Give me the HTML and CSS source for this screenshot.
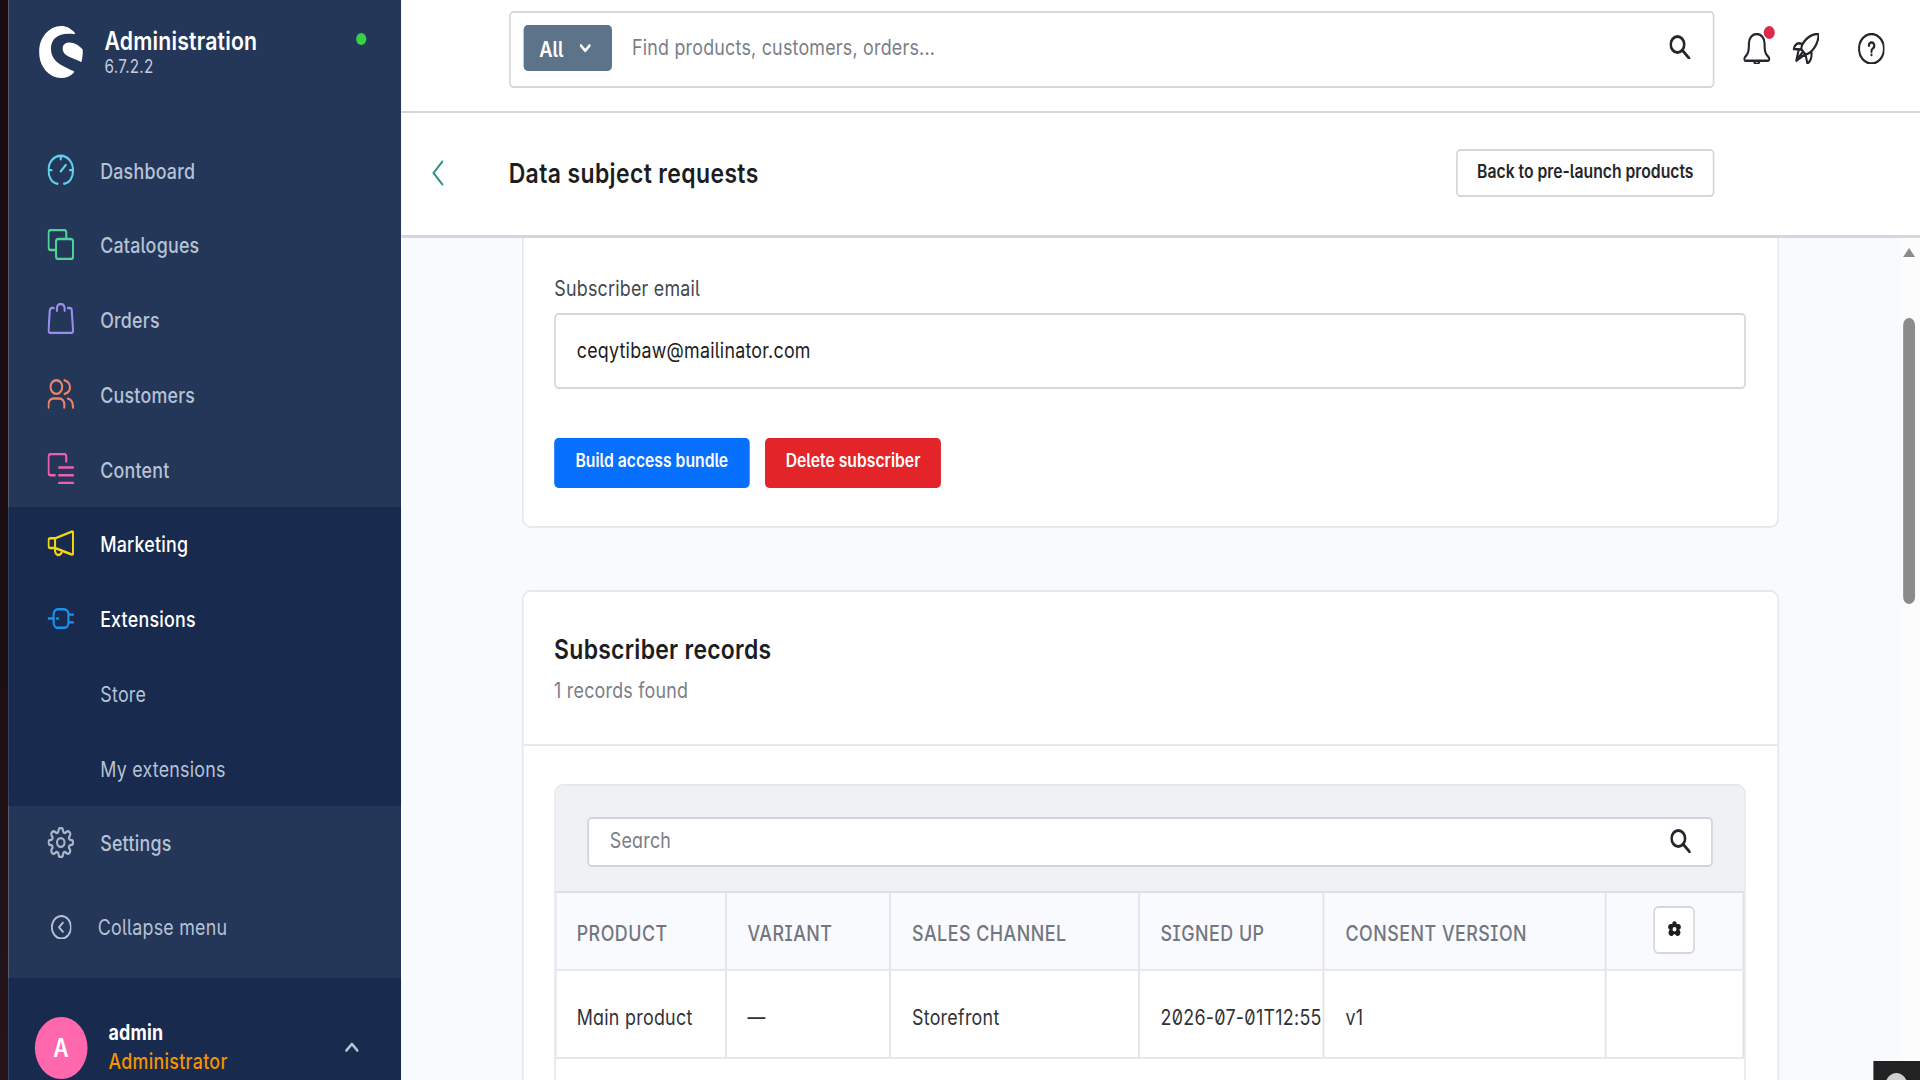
FILE: index.html
```html
<!DOCTYPE html>
<html lang="en">
<head>
	<meta charset="utf-8">
	<title>Data subject requests | Administration</title>
	<link rel="stylesheet" href="styles.css">
</head>
<body>
<div class="app">
	<div class="edge"></div>

	<aside class="sidebar">
		<div class="brand">
			<svg class="brand-logo" viewBox="0 0 52 52">
				<path d="M42.4 7.3C38 2.5 32 0 26 0 11.6 0 0 11.6 0 26s11.6 26 26 26c6 0 11-2 14.8-5.3.6-.6.4-1.2-.3-1.6C28 40 14 36 14 22.5 14 12 24 6 41.5 8.2z"/>
				<path d="M51.3 23.5C47 19.5 42 16.6 35.500 16.6c-5 0-7.800 2.400-7.800 6 0 8.400 13 9 21.300 13.400.4.2.8 0 .9-.5 1.300-4 1.700-8 1.400-12z"/>
			</svg>
			<div class="brand-text">
				<div class="brand-name">Administration</div>
				<div class="brand-version">6.7.2.2</div>
			</div>
			<span class="brand-status"></span>
		</div>

		<nav class="nav">
			<a class="nav-item">
				<svg class="icon c-dashboard" viewBox="0 0 24 24"><path d="M9 23C3.500 22.500.8 17.500.8 12.500a11.200 11.200 0 0 1 22.400 0c0 5-2.700 10-8.200 10.500M12 1.500v2.500M1 12.500h2.500M23 12.500h-2.500M12 13.500l4.500-5"/></svg>
				<span>Dashboard</span>
			</a>
			<a class="nav-item">
				<svg class="icon c-catalogue" viewBox="0 0 24 24"><rect x="7.700" y="7.700" width="15.500" height="15.500" rx="2"/><path d="M7.500 16.300H2.800a2 2 0 0 1-2-2V2.800a2 2 0 0 1 2-2H15a2 2 0 0 1 2 2v4.700"/></svg>
				<span>Catalogues</span>
			</a>
			<a class="nav-item">
				<svg class="icon c-order icon-up" viewBox="0 0 24 24"><path d="M5.500 3.900H4a2 2 0 0 0-2 2L.8 21.200a2 2 0 0 0 2 2h18.400a2 2 0 0 0 2-2L22 5.900a2 2 0 0 0-2-2h-1.500M8.500 6V4.200a3.500 3.500 0 0 1 7 0V6"/></svg>
				<span>Orders</span>
			</a>
			<a class="nav-item">
				<svg class="icon c-customer" viewBox="0 0 24 24"><circle cx="8" cy="7" r="5.300"/><path d="M.8 22.800v-2.500a4.500 4.500 0 0 1 4.500-4.500h5.400a4.500 4.500 0 0 1 4.500 4.500v2.500M15.500 1.800c6.500 1.700 6.500 8.900 0 10.500M18.500 16c3.200.6 4.700 2.500 4.700 6.800"/></svg>
				<span>Customers</span>
			</a>
			<a class="nav-item">
				<svg class="icon c-content" viewBox="0 0 24 24"><path d="M6.500 17.300H2.800a2 2 0 0 1-2-2V2.800a2 2 0 0 1 2-2H15a2 2 0 0 1 2 2v3.700M10.500 11.300h12.700M10.500 17.200h12.700M10.500 23.200h12.700"/></svg>
				<span>Content</span>
			</a>
			<div class="nav-group">
				<a class="nav-item active">
					<svg class="icon c-marketing" viewBox="0 0 24 24"><path d="M6.800 8L22 2.800q1.200-.4 1.200 1v15.700q0 1.400-1.200 1L6.800 15.500H2.300a1.500 1.500 0 0 1-1.500-1.500V9.500A1.500 1.500 0 0 1 2.300 8zM6.800 8v7.500M6.800 15.800c-.6 6.200 5.200 6.700 6.400 2"/></svg>
					<span>Marketing</span>
				</a>
				<a class="nav-item active">
					<svg class="icon c-extension" viewBox="0 0 24 24"><path d="M9.500 4.800H15a4 4 0 0 1 4 4v6.400a4 4 0 0 1-4 4H9.500a4 4 0 0 1-4-4V8.800a4 4 0 0 1 4-4zM.8 12H5M8.500 12h1M19.500 9h3.700M19.500 15h3.700"/></svg>
					<span>Extensions</span>
				</a>
				<a class="nav-item sub"><span>Store</span></a>
				<a class="nav-item sub"><span>My extensions</span></a>
			</div>
			<a class="nav-item">
				<svg class="icon c-settings" viewBox="0 0 24 24"><circle cx="12" cy="12" r="3.400"/><path d="M10 2.700a2 2 0 0 1 4 0q.2 2.300 2.300 1.800l1-.8a2.200 2.200 0 0 1 3 3l-.8 1q-.5 2.100 1.800 2.300a2 2 0 0 1 0 4q-2.300.2-1.800 2.300l.8 1a2.200 2.200 0 0 1-3 3l-1-.8q-2.100-.5-2.300 1.800a2 2 0 0 1-4 0q-.2-2.300-2.300-1.800l-1 .8a2.200 2.200 0 0 1-3-3l.8-1q.5-2.100-1.800-2.300a2 2 0 0 1 0-4q2.300-.2 1.800-2.300l-.8-1a2.200 2.200 0 0 1 3-3l1 .8q2.100.5 2.300-1.800z"/></svg>
				<span>Settings</span>
			</a>
		</nav>

		<a class="collapse">
			<svg class="collapse-icon" viewBox="0 0 24 24"><circle cx="12" cy="12" r="11"/><path d="M13.700 7.500L9.200 12l4.500 4.500"/></svg>
			<span>Collapse menu</span>
		</a>

		<div class="user">
			<div class="avatar">A</div>
			<div class="user-text">
				<div class="user-name">admin</div>
				<div class="user-role">Administrator</div>
			</div>
			<svg class="user-caret" viewBox="0 0 16 10"><path d="M1.500 8.500L8 2l6.500 6.500"/></svg>
		</div>
	</aside>

	<main class="main">
		<header class="topbar">
			<div class="search">
				<button class="search-type">All
					<svg class="caret" viewBox="0 0 12 8"><path d="M1.200 1.200L6 6l4.800-4.800"/></svg>
				</button>
				<span class="search-placeholder">Find products, customers, orders...</span>
				<svg class="lens" viewBox="0 0 24 24"><circle cx="9.300" cy="9.300" r="7.800"/><path d="M15 15l7.800 7.800"/></svg>
			</div>
			<div class="bell">
				<svg class="top-icon" viewBox="0 0 24 24"><path d="M12 .8a7 7 0 0 0-7 7c0 7.500-1.300 8.500-3.200 10.200-1.800 1.600-1 3.200.5 3.200h19.400c1.500 0 2.300-1.600.5-3.200C20.300 16.300 19 15.300 19 7.800a7 7 0 0 0-7-7zM9.800 21.500a2.200 2.200 0 0 0 4.400 0"/></svg>
				<span class="bell-badge"></span>
			</div>
			<svg class="top-icon rocket" viewBox="0 0 24 24"><path d="M7.800 12.500C7.500 7.500 15 .8 22.200.8q1 0 1 1C23 9 16.500 16 11.500 16.200zM8 8.300C4.800 6.800 1.500 9 .9 12.200l6.900.3M16.800 14.500c.6 3.800-.8 7.300-3.600 8.700l-1.700-7M7.800 12.500l3.700 3.700M5.500 12.500L3.300 21l8-4.800M3.300 21l5.700-6.500"/></svg>
			<svg class="top-icon help" viewBox="0 0 24 24"><circle cx="12" cy="12" r="11.200"/><path d="M9.700 9.700a2.400 2.400 0 1 1 3.500 2.100c-.9.500-1.200.9-1.200 1.900v.6M12 16.600v.2"/></svg>
		</header>

		<div class="pagebar">
			<svg class="back" viewBox="0 0 14 26"><path d="M12.500 1.500L2 13l10.500 11.500"/></svg>
			<h1 class="page-title">Data subject requests</h1>
			<button class="btn btn-outline">Back to pre-launch products</button>
		</div>

		<div class="content">
			<div class="cards">
				<section class="card card-lookup">
					<label class="label">Subscriber email</label>
					<div class="input">ceqytibaw@mailinator.com</div>
					<div class="actions">
						<button class="btn btn-primary">Build access bundle</button>
						<button class="btn btn-danger">Delete subscriber</button>
					</div>
				</section>

				<section class="card card-records">
					<div class="card-head">
						<h2 class="card-title">Subscriber records</h2>
						<p class="card-sub">1 records found</p>
					</div>
					<div class="listing">
						<div class="listing-bar">
							<div class="listing-search">
								<span>Search</span>
								<svg class="lens" viewBox="0 0 24 24"><circle cx="9.300" cy="9.300" r="7.800"/><path d="M15 15l7.800 7.800"/></svg>
							</div>
						</div>
						<div class="row row-head">
							<div class="cell">PRODUCT</div>
							<div class="cell">VARIANT</div>
							<div class="cell">SALES CHANNEL</div>
							<div class="cell">SIGNED UP</div>
							<div class="cell">CONSENT VERSION</div>
							<div class="cell cell-tools">
								<button class="gear"><svg viewBox="0 0 16 16"><path fill-rule="evenodd" d="M8 .3c1.700 0 2.700 1.200 2.600 3 1.800-.6 3.800-.2 4.600 1.500.8 1.900 0 3.300-1.700 3.900 1.500 1.300 2 3.400.9 4.800-1.500 1.900-4 2-5.200.2L8 13l-1.200.7c-1.200 1.800-3.700 1.700-5.200-.2-1.100-1.400-.6-3.500.9-4.800C.8 8.100 0 6.700.8 4.800c.8-1.700 2.800-2.100 4.600-1.500C5.300 1.500 6.300.3 8 .3zm0 5.700a2.300 2.300 0 1 0 0 4.600A2.300 2.300 0 0 0 8 6z"/></svg></button>
							</div>
						</div>
						<div class="row row-body">
							<div class="cell">Main product</div>
							<div class="cell">—</div>
							<div class="cell">Storefront</div>
							<div class="cell">2026-07-01T12:55</div>
							<div class="cell">v1</div>
							<div class="cell"></div>
						</div>
					</div>
				</section>
			</div>
			<div class="scrollbar">
				<span class="scroll-up"></span>
				<span class="scroll-thumb"></span>
			</div>
		</div>
	</main>

	<div class="debugbar"><span class="debugbar-logo"></span></div>
</div>
</body>
</html>
```
FILE: styles.css
```css
* { box-sizing: border-box; }
html { overflow: hidden; }
body {
	margin: 0;
	width: 1920px;
	height: 1080px;
	overflow: hidden;
	font-family: Inter, "Liberation Sans", sans-serif;
	font-feature-settings: "cv05", "cv08";
	font-size: 21px;
	letter-spacing: .27px;
	color: #1c1d21;
	background: #f9fafe;
}
h1, h2, p { margin: 0; }
button { font: inherit; font-feature-settings: inherit; letter-spacing: 0; }
svg { fill: none; stroke: currentColor; stroke-linecap: round; stroke-linejoin: round; flex: none; display: block; }

/* the whole admin is drawn slightly condensed */
.app {
	position: relative;
	display: flex;
	width: 2258.800px;
	height: 1080px;
	overflow: hidden;
	transform: scaleX(.85);
	transform-origin: 0 0;
}
.edge { width: 10px; flex: none; background: linear-gradient(#180c12, #1c0f14 60%, #26141b); }

/* sidebar */
.sidebar {
	width: 462.400px;
	flex: none;
	display: flex;
	flex-direction: column;
	background: #243758;
	color: #b6c2d6;
}
.brand {
	display: flex;
	align-items: flex-start;
	height: 133.200px;
	padding: 25.700px 41px 0 36px;
	color: #fff;
}
.brand-logo { width: 52px; height: 52px; fill: #fff; stroke: none; }
.brand-text { flex: 1; margin-left: 25px; }
.brand-name { font-size: 25px; font-weight: 600; line-height: 31px; letter-spacing: .2px; }
.brand-version { font-size: 18px; line-height: 20px; color: #c3cddd; }
.brand-status { width: 12.500px; height: 12.500px; margin-top: 7px; border-radius: 50%; background: #37d046; }
.nav-item {
	display: flex;
	align-items: center;
	gap: 30.500px;
	height: 74.750px;
	padding: 1px 0 0 46.300px;
	font-weight: 500;
}
.nav-item.active { color: #fff; }
.nav-item.sub { padding-left: 108px; font-weight: 400; padding-top: 2px; }
.nav-group { background: #182a4d; }
.icon { width: 31px; height: 31px; stroke-width: 1.900; margin-top: -3px; }
.icon-up { margin-top: -5px; }
.c-dashboard { color: #5fd0ea; }
.c-catalogue { color: #4fd39a; }
.c-order { color: #9a8df0; }
.c-customer { color: #e98562; }
.c-content { color: #ee5fae; }
.c-marketing { color: #f5d412; }
.c-extension { color: #1a92ee; }
.c-settings { color: #a9b6c9; }
.collapse {
	display: flex;
	align-items: center;
	gap: 31px;
	height: 97px;
	padding: 0 0 4px 49.500px;
}
.collapse-icon { width: 24.500px; height: 24.500px; stroke-width: 2; }
.user {
	display: flex;
	flex: 1;
	padding: 39.500px 50px 0 31px;
	background: #182a4d;
}
.avatar {
	width: 62px;
	height: 62px;
	border-radius: 50%;
	background: #ff68ac;
	color: #fff;
	font-size: 25px;
	font-weight: 600;
	line-height: 62px;
	text-align: center;
	flex: none;
}
.user-text { flex: 1; margin: 1px 0 0 24.500px; line-height: 29px; }
.user-name { color: #fff; font-weight: 700; }
.user-role { color: #f59300; font-weight: 500; letter-spacing: .35px; }
.user-caret { width: 16px; height: 10px; margin-top: 25px; stroke-width: 2.800; }

/* top bar */
.main { flex: 1; display: flex; flex-direction: column; background: #fff; }
.topbar {
	display: flex;
	height: 112.500px;
	padding: 10.500px 0 0 126.500px;
	border-bottom: 2px solid #d5d7de;
}
.search {
	display: flex;
	align-items: center;
	width: 1418.500px;
	height: 77.500px;
	padding: 0 26.500px 3px 15px;
	border: 2px solid #d5d7de;
	border-radius: 5px;
}
.search-type {
	display: flex;
	align-items: center;
	justify-content: space-between;
	width: 104.500px;
	height: 45.500px;
	padding: 2px 25px 0 18.500px;
	border: 0;
	border-radius: 5px;
	background: #5c738a;
	color: #fff;
	font-size: 21.500px;
	font-weight: 600;
}
.caret { width: 13px; height: 9px; stroke-width: 2.600; margin-top: -1px; }
.search-placeholder { flex: 1; margin-left: 23px; color: #7b7e86; }
.lens { width: 24.500px; height: 24.500px; stroke-width: 3; color: #24262b; margin-top: -2px; }
.top-icon { width: 31.500px; height: 31.500px; stroke-width: 1.900; color: #24262b; margin-top: 22px; }
.bell { position: relative; margin: 0 26px 0 34px; }
.bell-badge {
	position: absolute;
	top: 15.500px;
	right: -5px;
	width: 13px;
	height: 13px;
	border-radius: 50%;
	background: #de294c;
}
.help { margin-left: 45.500px; }

/* page bar */
.pagebar {
	display: flex;
	align-items: center;
	height: 125.500px;
	padding: 0 0 1px 36px;
	border-bottom: 3px solid #d5d7de;
}
.back { width: 14px; height: 26px; stroke-width: 2.200; color: #2f9285; }
.page-title {
	margin-left: 76px;
	font-size: 27px;
	font-weight: 600;
	letter-spacing: .45px;
}
.btn {
	height: 50.500px;
	padding: 0 0 5px;
	border: 0;
	border-radius: 5px;
	font-size: 18.500px;
	font-weight: 600;
	color: #fff;
	white-space: nowrap;
	flex: none;
}
.btn-outline {
	width: 304.500px;
	height: 48px;
	margin: 0 241.500px 1px auto;
	border: 2px solid #d5d7de;
	background: #fff;
	color: #24262b;
	padding: 0 0 3px;
}
.btn-primary { width: 229.500px; background: #0870ff; }
.btn-danger { width: 207px; background: #e32429; }

/* content */
.content { flex: 1; display: flex; min-height: 0; overflow: hidden; background: #f9fafe; }
.cards { flex: 1; padding-left: 142px; }
.card {
	width: 1478.500px;
	border: 2px solid #e7e8ee;
	background: #fff;
}
.card-lookup {
	height: 290px;
	padding: 38px 0 0 35.700px;
	border-top: 0;
	border-radius: 0 0 10px 10px;
}
.label { display: block; line-height: 26px; color: #44474e; }
.input {
	width: 1401.500px;
	height: 76px;
	margin-top: 11px;
	padding-left: 24.500px;
	border: 2px solid #d5d7de;
	border-radius: 5px;
	line-height: 72px;
}
.actions { display: flex; gap: 18.500px; margin-top: 48.500px; }
.card-records {
	height: 520px;
	margin-top: 62px;
	border-radius: 10px 10px 0 0;
}
.card-head {
	height: 154px;
	padding: 41.500px 0 0 35.500px;
	border-bottom: 2px solid #e7e8ee;
}
.card-title { font-size: 27px; font-weight: 600; line-height: 32px; letter-spacing: .32px; }
.card-sub { margin-top: 12px; line-height: 26px; color: #7b7e86; }

/* listing */
.listing {
	width: 1402px;
	height: 400px;
	margin: 38px 0 0 35.500px;
	border: 2px solid #e7e8ee;
	border-radius: 10px 10px 0 0;
	overflow: hidden;
	font-feature-settings: "cv05", "cv08", "cv11", "zero";
}
.listing-bar {
	height: 105px;
	padding: 30.500px 37px 0;
	background: #f0f1f5;
}
.listing-search {
	display: flex;
	align-items: center;
	justify-content: space-between;
	height: 50px;
	padding: 0 23.500px 2px 24.500px;
	border: 2px solid #d1d4da;
	border-radius: 5px;
	background: #fff;
	color: #7b7e86;
}
.listing-search .lens { margin-top: 1px; }
.row {
	display: grid;
	grid-template-columns: 201px 193.500px 292.500px 217.500px 331.500px 1fr;
	border-bottom: 2px solid #e7e8ee;
}
.row-head {
	height: 79.500px;
	border-top: 2px solid #dae0e7;
	background: #f9fafe;
	color: #73767e;
	font-weight: 500;
	letter-spacing: .58px;
}
.row-body { height: 88px; color: #303238; letter-spacing: .33px; }
.cell {
	display: flex;
	align-items: center;
	padding-left: 24.500px;
	padding-top: 5px;
	border-right: 2px solid #e0e2e9;
	white-space: nowrap;
}
.row-body .cell { padding-top: 8px; }
.cell:first-child { padding-left: 23.500px; border-left: 1.500px solid #e7e8ee; }
.row .cell-tools { justify-content: center; padding: 0 0 1px; }
.gear {
	display: flex;
	align-items: center;
	justify-content: center;
	width: 49px;
	height: 48px;
	padding: 0 0 2px;
	border: 2px solid #d5d7de;
	border-radius: 6px;
	background: #fff;
}
.gear svg { width: 16px; height: 16px; fill: #1c1d21; stroke: none; }

/* scrollbar */
.scrollbar {
	display: flex;
	flex-direction: column;
	align-items: center;
	width: 22px;
	padding: 10px 3px 0 0;
	background: #fcfcfd;
}
.scroll-up {
	border: 7.500px solid transparent;
	border-top: 0;
	border-bottom: 9px solid #8b8b8b;
}
.scroll-thumb { width: 14px; height: 286px; margin-top: 61px; border-radius: 7px; background: #8b8b8b; }

/* collapsed profiler toggle in the window corner */
.debugbar {
	position: absolute;
	right: 0;
	bottom: 0;
	width: 55px;
	height: 19px;
	padding: 12px 0 0 14px;
	overflow: hidden;
	background: #222;
}
.debugbar-logo { display: block; width: 26px; height: 26px; border-radius: 50%; background: #cfcfcf; }
```
